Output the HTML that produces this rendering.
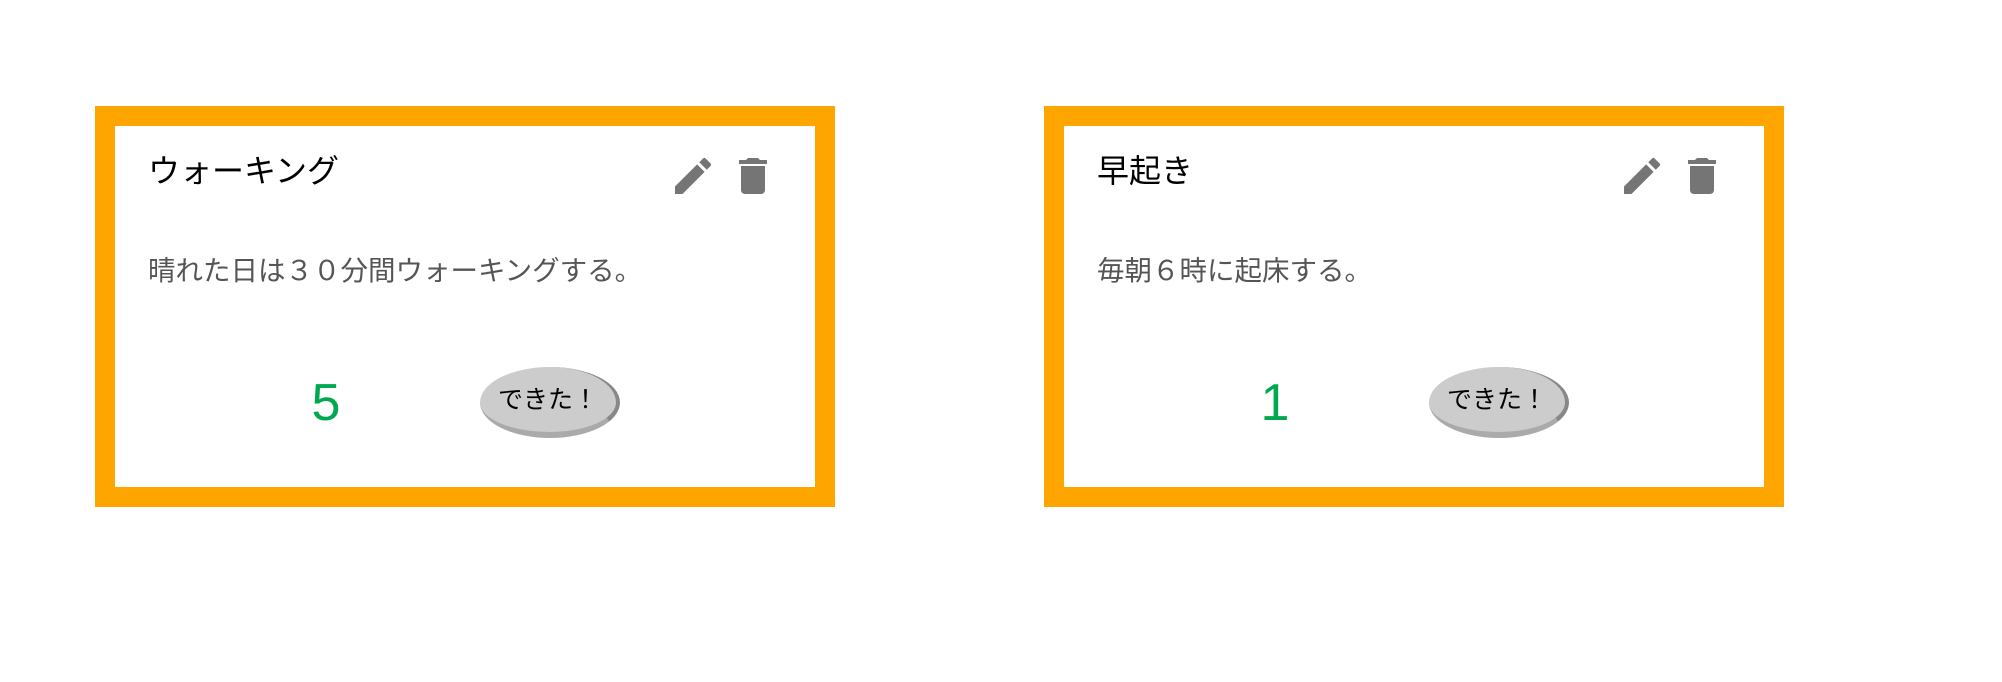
<!DOCTYPE html>
<html><head><meta charset="utf-8"><style>
body{margin:0;width:2002px;height:682px;background:#fff;position:relative;overflow:hidden;font-family:"Liberation Sans","Noto Sans CJK JP",sans-serif}
.card{position:absolute;top:106px;width:700px;height:361px;border:20px solid #ffa500;background:#fff}
.t{position:absolute;left:33px;top:28px;font-size:32px;line-height:34px;color:#000;white-space:nowrap}
.d{position:absolute;left:33px;top:131px;font-size:27.5px;line-height:28px;color:#555;white-space:nowrap}
.n{position:absolute;left:170px;width:82px;text-align:center;top:249px;font-size:52px;line-height:56px;color:#00a84f}
.b{position:absolute;left:365px;top:241px;width:140px;height:71px;border-radius:50%;background:#ccc;box-sizing:border-box;border-right:4px solid #888;border-bottom:6px solid #aaa;font-size:25px;line-height:66px;text-align:center;color:#000}
svg{position:absolute;top:26px;width:48px;height:48px;fill:#757575}
</style></head><body>
<div class="card" style="left:95px">
<div class="t">ウォーキング</div>
<svg style="left:554px" viewBox="0 0 24 24"><path d="M3 17.25V21h3.75L17.81 9.94l-3.75-3.750L3 17.25zM20.71 7.04a1 1 0 000-1.410l-2.34-2.34a1 1 0 00-1.41 0l-1.83 1.83 3.75 3.75 1.83-1.83z"/></svg>
<svg style="left:614px" viewBox="0 0 24 24"><path d="M6 19c0 1.1.9 2 2 2h8c1.1 0 2-.9 2-2V7H6v12zM19 4h-3.5l-1-1h-5l-1 1H5v2h14V4z"/></svg>
<div class="d">晴れた日は３０分間ウォーキングする。</div>
<div class="n">5</div>
<div class="b">できた！</div>
</div>
<div class="card" style="left:1044px">
<div class="t">早起き</div>
<svg style="left:554px" viewBox="0 0 24 24"><path d="M3 17.25V21h3.75L17.81 9.94l-3.75-3.75L3 17.25zM20.71 7.04a1 1 0 000-1.41l-2.34-2.34a1 1 0 00-1.41 0l-1.83 1.83 3.75 3.75 1.83-1.83z"/></svg>
<svg style="left:614px" viewBox="0 0 24 24"><path d="M6 19c0 1.1.9 2 2 2h8c1.1 0 2-.9 2-2V7H6v12zM19 4h-3.5l-1-1h-5l-1 1H5v2h14V4z"/></svg>
<div class="d">毎朝６時に起床する。</div>
<div class="n">1</div>
<div class="b">できた！</div>
</div>
</body></html>
